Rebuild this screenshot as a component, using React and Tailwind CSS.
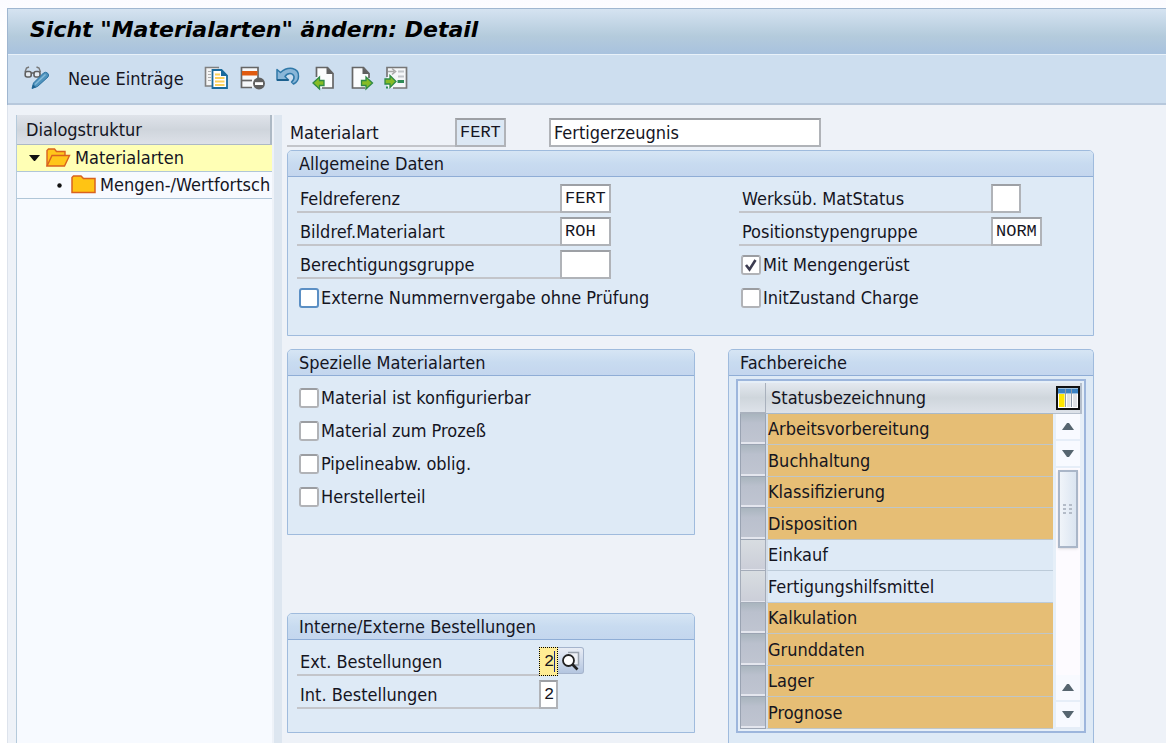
import React, { useState } from "react";

const AREAS = [
  { name: "Arbeitsvorbereitung", selected: true },
  { name: "Buchhaltung", selected: true },
  { name: "Klassifizierung", selected: true },
  { name: "Disposition", selected: true },
  { name: "Einkauf", selected: false },
  { name: "Fertigungshilfsmittel", selected: false },
  { name: "Kalkulation", selected: true },
  { name: "Grunddaten", selected: true },
  { name: "Lager", selected: true },
  { name: "Prognose", selected: true },
];

/* ---------- toolbar icons ---------- */

const DisplayChangeIcon = () => (
  <svg width="26" height="26" viewBox="0 0 26 26" fill="none">
    <path d="M1 6 L2.500 2 L5 1 M16.500 6 L15 2 L12.500 1" stroke="#777" strokeWidth="1.400" />
    <rect x="1.200" y="5.500" width="6" height="5.500" rx="2" fill="#e6ecf2" stroke="#5f5f5f" strokeWidth="1.600" />
    <rect x="10" y="5.500" width="6" height="5.500" rx="2" fill="#e6ecf2" stroke="#5f5f5f" strokeWidth="1.600" />
    <path d="M7.500 7h3" stroke="#5f5f5f" strokeWidth="1.500" />
    <path d="M8 22.500 L9.500 17 L19.500 7 Q21.500 5.500 23.500 7 Q25.500 9 24 11 L13.500 20.500 Z" fill="#4f93bd" stroke="#2a71a0" />
    <path d="M11 18.500 L21.500 8.500" stroke="#86bbda" strokeWidth="1.500" />
    <path d="M8 22.500 L9 18.500 L12 21.200 Z" fill="#1d618f" />
  </svg>
);

const CopyIcon = () => (
  <svg width="26" height="26" viewBox="0 0 26 26" fill="none">
    <path d="M14 1.500H1.500V20H8" fill="#f5f5f5" />
    <path d="M15 1.500H1.500V20H8" stroke="#808080" strokeWidth="1.600" />
    <path d="M4 5.500h3M4 8.500h3M4 11.500h3M4 14.500h3" stroke="#b0b0b0" />
    <path d="M8.500 4H17.500L23 9.500V22H8.500Z" fill="#fff" stroke="#1a6a9c" strokeWidth="1.800" />
    <path d="M17 3.500V10H23.500Z" fill="#1a6a9c" />
    <path d="M11 8.500h5M11 12h9.500M11 15.500h9.500M11 19h9.500" stroke="#fcd05a" strokeWidth="2" />
  </svg>
);

const DeleteIcon = () => (
  <svg width="26" height="26" viewBox="0 0 26 26" fill="none">
    <path d="M1.500 1.500H18V21.500H1.500Z" fill="#f6f8fa" />
    <path d="M18 14V1.500H1.500V21.500H12" stroke="#666" strokeWidth="1.700" />
    <path d="M2 14.500H12" stroke="#666" strokeWidth="1.700" />
    <rect x="2" y="5" width="15.500" height="4.500" fill="#e05a10" />
    <circle cx="19" cy="17.500" r="6" fill="#606060" />
    <rect x="15" y="16.200" width="8" height="2.800" fill="#fff" />
  </svg>
);

const UndoIcon = () => (
  <svg width="26" height="26" viewBox="0 0 26 26" fill="none">
    <path
      d="M1 3.500 L4.500 6.500 Q10 1.500 16.500 2.500 Q23 4 22.500 10.500 Q22.500 15.500 17.500 18 L15.500 16 Q18.500 13.500 18 10.500 Q17 7.500 14 7.500 Q11 7.500 9 10.500 L12.500 14 H1 Z"
      fill="#8ab6d8"
      stroke="#2f78a8"
      strokeWidth="1.500"
      strokeLinejoin="round"
    />
    <path d="M1 14H12.500" stroke="#1d618f" strokeWidth="2" />
  </svg>
);

const GREEN_LEFT = "M1 17 L7.500 11 V14.500 H12 V19.500 H7.500 V23 Z";
const GREEN_RIGHT = "M23.500 17 L17 11 V14.500 H12.500 V19.500 H17 V23 Z";

const PrevIcon = () => (
  <svg width="26" height="26" viewBox="0 0 26 26" fill="none">
    <path d="M4.500 1.500H15L21 7.500V22H4.500Z" fill="#fbfcfd" />
    <path d="M4.500 11V1.500H15.500L21 7.500V22H10" stroke="#666" strokeWidth="1.700" />
    <path d="M14.500 1V8H21.500Z" fill="#606060" />
    <path d={GREEN_LEFT} fill="#86bc25" stroke="#2f8a46" strokeWidth="1.300" />
  </svg>
);

const NextIcon = () => (
  <svg width="26" height="26" viewBox="0 0 26 26" fill="none">
    <path d="M4.500 1.500H15L21 7.500V22H4.500Z" fill="#fbfcfd" />
    <path d="M21 12V7.500L15.500 1.500H4.500V22H17" stroke="#666" strokeWidth="1.700" />
    <path d="M14.500 1V8H21.500Z" fill="#606060" />
    <path d={GREEN_RIGHT} transform="translate(1 0)" fill="#86bc25" stroke="#2f8a46" strokeWidth="1.300" />
  </svg>
);

const PositionIcon = () => (
  <svg width="26" height="26" viewBox="0 0 26 26" fill="none">
    <path d="M3 1.500H22.500V22H3Z" fill="#f5f7f9" />
    <path d="M3 11V1.500H22.500V22H9" stroke="#777" strokeWidth="1.700" />
    <path d="M4 5.500H10M8 2.500L11.500 5.500L8 8.500" stroke="#aaa" strokeWidth="1.600" />
    <path d="M14 5.500h6M14 10.500h6" stroke="#c2c6ca" strokeWidth="2" />
    <path d="M13.500 15.500h6.500" stroke="#2f8a56" strokeWidth="3" />
    <path d="M2 21.500h2" stroke="#2f8a56" strokeWidth="2" />
    <path d="M12 15.500 L6 9.500 V13 H1 V18 H6 V21.500 Z" fill="#86bc25" stroke="#2f8a46" strokeWidth="1.300" />
  </svg>
);

const OpenFolderIcon = () => (
  <svg width="25" height="20" viewBox="0 0 25 20" fill="none">
    <path d="M1 18V2.500L2.500 1H8.500L10.500 3.500H19V7" fill="#ffc61a" stroke="#d9621e" strokeWidth="1.400" />
    <path d="M1 18L6 7.500H23.500L18.500 18Z" fill="#ffc61a" stroke="#d9621e" strokeWidth="1.400" />
  </svg>
);

const FolderIcon = () => (
  <svg width="25" height="20" viewBox="0 0 25 20" fill="none">
    <path d="M1 17.500V2.500L2.500 1H10L12.500 3.500H24V17.500Z" fill="#ffc414" stroke="#d9621e" strokeWidth="1.500" />
  </svg>
);

const TableSettingsIcon = () => (
  <svg width="24" height="24" viewBox="0 0 24 24" fill="none">
    <rect x="1" y="1" width="22" height="22" fill="#fff" stroke="#111" strokeWidth="2" />
    <rect x="2" y="2.500" width="20" height="5" fill="#3c83c4" />
    <rect x="3" y="8" width="5.500" height="13" fill="#ffe600" />
    <rect x="11" y="8" width="3.500" height="13" fill="#e1e3e6" />
    <rect x="17" y="8" width="4" height="13" fill="#e1e3e6" />
    <path d="M9.500 3v18M15.500 3v18" stroke="#8f9aa8" />
  </svg>
);

const SearchHelpIcon = () => (
  <svg width="20" height="20" viewBox="0 0 20 20" fill="none">
    <path d="M7 1.500H17.500V14H12" fill="#eef1f6" stroke="#98a0ab" strokeWidth="1.500" />
    <circle cx="7.500" cy="9.500" r="5.500" fill="#fff" stroke="#222" strokeWidth="1.800" />
    <path d="M11.500 13.500L16.500 18.500" stroke="#222" strokeWidth="2.600" />
  </svg>
);

/* ---------- building blocks ---------- */

function ToolButton({ title, children }) {
  return (
    <button type="button" aria-label={title} className="h-[26px] w-[26px] shrink-0">
      {children}
    </button>
  );
}

function Group({ title, className = "", bodyClass = "px-[9px] pt-[7px] pb-[23px]", children }) {
  return (
    <section className={`flex flex-col rounded-t-[5px] border border-[#9fbbdd] bg-[#deeaf6] ${className}`}>
      <h2 className="h-[26px] shrink-0 rounded-t-[4px] border-b border-[#8fadd6] bg-gradient-to-b from-[#d6e5f4] via-[#c8dbf0] to-[#c4d6ee] px-[11px] leading-[25px]">
        {title}
      </h2>
      <div className={bodyClass}>{children}</div>
    </section>
  );
}

function Field({ id, label, value = "", labelClass, inputClass = "w-[51px] bg-white" }) {
  return (
    <div className="flex h-[29px]">
      <label htmlFor={id} className={`shrink-0 border-b-2 border-[#c3c5ca] pl-[3px] leading-[30px] ${labelClass}`}>
        {label}
      </label>
      <input
        id={id}
        defaultValue={value}
        className={`h-[29px] border-2 border-[#b0b3b8] border-t-[#9da0a5] pl-[3px] font-['Liberation_Mono',monospace] text-[17px] outline-none ${inputClass}`}
      />
    </div>
  );
}

function Check({ id, label, checked = false, focused = false }) {
  const [on, setOn] = useState(checked);
  return (
    <div className="flex h-[29px] items-center gap-[2px] pl-[2px]">
      <span className="relative flex h-5 w-5 shrink-0">
        <input
          id={id}
          type="checkbox"
          checked={on}
          onChange={e => setOn(e.target.checked)}
          className={`h-5 w-5 appearance-none rounded-[3px] border-2 bg-white ${focused ? "border-[#5b8fc4]" : "border-[#b1b3b7] border-t-[#9b9da1]"}`}
        />
        {on && (
          <svg className="pointer-events-none absolute inset-0" width="20" height="20" viewBox="0 0 20 20" fill="none">
            <path d="M5 10L8.500 14.500L14.500 5" stroke="#3c3c50" strokeWidth="2.600" />
          </svg>
        )}
      </span>
      <label htmlFor={id} className="whitespace-nowrap">{label}</label>
    </div>
  );
}

function Arrow({ up }) {
  return (
    <button type="button" aria-label={up ? "Nach oben" : "Nach unten"} className="flex h-[27px] w-full shrink-0 items-center justify-center border-b-2 border-[#e6eef8] bg-[#f8faff]">
      <svg width="12" height="7" viewBox="0 0 12 7">
        <path d={up ? "M0 7L5 0H7L12 7Z" : "M0 0L5 7H7L12 0Z"} fill="#56656f" />
      </svg>
    </button>
  );
}

function AreaTable() {
  return (
    <div className="flex border-2 border-[#9db6dc] bg-[#e6eff8] p-[2px]">
      <table className="flex-1 border-separate border-spacing-0 text-left">
        <thead>
          <tr className="h-[31px]">
            <th className="w-[26px] border-r border-b-2 border-[#a9b1bd] bg-gradient-to-b from-[#e3e8ef] via-[#cfd6dc] to-[#dde2e9] p-0" />
            <th className="border-b border-[#a9b9c9] bg-gradient-to-b from-[#e3e8ef] via-[#cfd6dc] to-[#dde2e9] p-0 pl-[5px] font-normal">
              Statusbezeichnung
            </th>
          </tr>
        </thead>
        <tbody>
          {AREAS.map(area => (
            <tr key={area.name} className="odd:h-[31px] even:h-8">
              <td
                className={
                  area.selected
                    ? "border border-t-0 border-[#9aa3b2] bg-gradient-to-b from-[#a9b5be] via-[#bac0cd] via-30% to-[#c0c5d1] p-0 shadow-[inset_0_-2px_0_#e4e6ee]"
                    : "border border-t-0 border-[#a4acb9] bg-gradient-to-b from-[#d8dde1] to-[#cbced8] p-0 shadow-[inset_0_-1px_0_#e4e6ee]"
                }
              />
              <td
                className={
                  area.selected
                    ? "border-b border-l-2 border-b-[#bfc6c8] border-l-[#d3dde8] bg-[#e6be75] p-0"
                    : "border-b border-l-2 border-b-[#bccbd9] border-l-[#d3dde8] bg-[#deeaf6] p-0"
                }
              >
                {area.name}
              </td>
            </tr>
          ))}
        </tbody>
      </table>
      <div className="flex w-[29px] shrink-0 flex-col">
        <div className="flex h-[31px] shrink-0 items-center justify-end border-r-2 border-b border-[#b5bfcc] bg-gradient-to-b from-[#e3e8ef] via-[#cfd6dc] to-[#dde2e9]">
          <button type="button" aria-label="Tabelleneinstellungen"><TableSettingsIcon /></button>
        </div>
        <div className="flex flex-1 flex-col pr-[2px] pl-[3px]">
          <Arrow up />
          <Arrow />
          <div className="flex-1 bg-[#fdfbff] px-[2px] pt-[2px]">
            <div className="flex h-[78px] items-center justify-center border-2 border-[#aab6c8] bg-gradient-to-r from-[#f0f4f9] to-[#dbe5f1] shadow">
              <svg width="10" height="12" viewBox="0 0 10 12">
                <path d="M0 2h3M6 2h3M0 6h3M6 6h3M0 10h3M6 10h3" stroke="#b4bcc8" strokeWidth="2" />
              </svg>
            </div>
          </div>
          <Arrow up />
          <Arrow />
        </div>
      </div>
    </div>
  );
}

export default function App() {
  return (
    <div className="flex min-h-screen flex-col bg-gradient-to-b from-[#fbfbff] to-white to-5% pt-2 pl-[7px] font-['DejaVu_Sans_Condensed','DejaVu_Sans',sans-serif] text-[18px] leading-6 text-[#15151f]">
      <header className="border-t border-l border-[#9fb6d0]">
        <h1 className="h-[46px] truncate border-b border-[#e8f1f9] bg-gradient-to-b from-[#d5e3f1] via-[#b4cbdc] via-60% to-[#a8c2de] pl-[22px] font-['DejaVu_Sans',sans-serif] text-[22px] leading-[42px] font-bold text-black italic">
          Sicht "Materialarten" ändern: Detail
        </h1>
        <div className="flex h-[50px] items-start gap-[10px] border-b-2 border-[#b7c8dc] bg-[#cddeef] pt-[11px] pl-4">
          <ToolButton title="Anzeigen/Ändern"><DisplayChangeIcon /></ToolButton>
          <button type="button" className="h-[26px] w-[134px] shrink-0 pl-2 text-left whitespace-nowrap">Neue Einträge</button>
          <ToolButton title="Kopieren"><CopyIcon /></ToolButton>
          <ToolButton title="Löschen"><DeleteIcon /></ToolButton>
          <ToolButton title="Rückgängig"><UndoIcon /></ToolButton>
          <ToolButton title="Voriger Eintrag"><PrevIcon /></ToolButton>
          <ToolButton title="Nächster Eintrag"><NextIcon /></ToolButton>
          <ToolButton title="Anderer Eintrag"><PositionIcon /></ToolButton>
        </div>
      </header>

      <div className="flex flex-1 border-l border-[#dde3ec] bg-[#eef2f8] pt-[10px] pl-2">
        <aside className="w-64 shrink-0 overflow-hidden border-l border-[#b5cadb] bg-[#f7faff]">
          <div className="h-[30px] border-r-2 border-b border-[#adb9c5] bg-gradient-to-b from-[#dfe3ea] via-[#cfd5dc] to-[#dde1e8] pl-[9px] leading-[30px]">
            Dialogstruktur
          </div>
          <div className="flex h-[27px] items-center border-b border-[#b0c6d8] bg-[#ffffb5] pl-3">
            <svg width="11" height="6" viewBox="0 0 11 6" className="mr-[6px] shrink-0"><path d="M0 0H11L6 6H5Z" fill="#111" /></svg>
            <OpenFolderIcon />
            <span className="pl-1">Materialarten</span>
          </div>
          <div className="flex h-[27px] items-center border-b border-[#b0c6d8] pl-10">
            <svg width="5" height="5" viewBox="0 0 5 5" className="mr-[9px] shrink-0"><circle cx="2.500" cy="2.500" r="2.200" fill="#111" /></svg>
            <span className="shrink-0"><FolderIcon /></span>
            <span className="pl-1 whitespace-nowrap">Mengen-/Wertfortsch</span>
          </div>
        </aside>

        <div className="ml-[2px] w-2 shrink-0 bg-[#dde6f0]" />

        <main className="flex flex-1 flex-col pt-[3px] pr-[72px] pl-[5px]">
          <div className="mb-[3px] flex">
            <Field id="mtart" label="Materialart" value="FERT" labelClass="w-[168px]" inputClass="w-[51px] bg-[#dce8f4]" />
            <input
              aria-label="Bezeichnung"
              defaultValue="Fertigerzeugnis"
              className="ml-[43px] h-[29px] w-[272px] border-2 border-[#b0b3b8] border-t-[#9da0a5] bg-white pl-[3px] outline-none"
            />
          </div>

          <Group title="Allgemeine Daten">
            <div className="grid grid-cols-[1fr_345px]">
              <div className="flex flex-col gap-1">
                <Field id="feldref" label="Feldreferenz" value="FERT" labelClass="w-[263px]" />
                <Field id="bildref" label="Bildref.Materialart" value="ROH" labelClass="w-[263px]" />
                <Field id="begru" label="Berechtigungsgruppe" labelClass="w-[263px]" />
                <Check id="extern" label="Externe Nummernvergabe ohne Prüfung" focused />
              </div>
              <div className="flex flex-col gap-1">
                <Field id="status" label="Werksüb. MatStatus" labelClass="w-[252px]" inputClass="w-[30px] bg-white" />
                <Field id="postyp" label="Positionstypengruppe" value="NORM" labelClass="w-[252px]" />
                <Check id="menge" label="Mit Mengengerüst" checked />
                <Check id="charge" label="InitZustand Charge" />
              </div>
            </div>
          </Group>

          <div className="mt-[13px] grid flex-1 grid-cols-[1fr_366px] gap-x-[33px]">
            <div>
              <Group title="Spezielle Materialarten">
                <div className="flex flex-col gap-1">
                  <Check id="konfig" label="Material ist konfigurierbar" />
                  <Check id="prozess" label="Material zum Prozeß" />
                  <Check id="pipeline" label="Pipelineabw. oblig." />
                  <Check id="hersteller" label="Herstellerteil" />
                </div>
              </Group>

              <Group title="Interne/Externe Bestellungen" className="mt-[78px]">
                <div className="flex flex-col gap-1">
                  <div className="flex h-[29px]">
                    <label htmlFor="extbest" className="w-[242px] border-b-2 border-[#c3c5ca] pl-[3px] leading-[30px]">
                      Ext. Bestellungen
                    </label>
                    <span className="relative">
                      <input
                        id="extbest"
                        defaultValue="2"
                        className="block h-[29px] w-[19px] border border-dotted border-black bg-[#ffec94] pl-1 font-['Liberation_Mono',monospace] text-[17px] outline-none"
                      />
                      <span className="absolute top-1 right-[3px] h-[21px] w-px bg-[#1c2b80]" />
                    </span>
                    <button
                      type="button"
                      aria-label="Werthilfe"
                      className="flex h-[27px] w-[26px] items-center justify-center rounded-r-[3px] border border-l-0 border-[#a5b4cc] bg-gradient-to-b from-[#e9edf5] to-[#b4c6e0]"
                    >
                      <SearchHelpIcon />
                    </button>
                  </div>
                  <Field id="intbest" label="Int. Bestellungen" value="2" labelClass="w-[242px]" inputClass="w-[19px] bg-white" />
                </div>
              </Group>
            </div>

            <Group title="Fachbereiche" className="border-b-0" bodyClass="px-[7px] pt-[3px] pb-2">
              <AreaTable />
            </Group>
          </div>
        </main>
      </div>
    </div>
  );
}
